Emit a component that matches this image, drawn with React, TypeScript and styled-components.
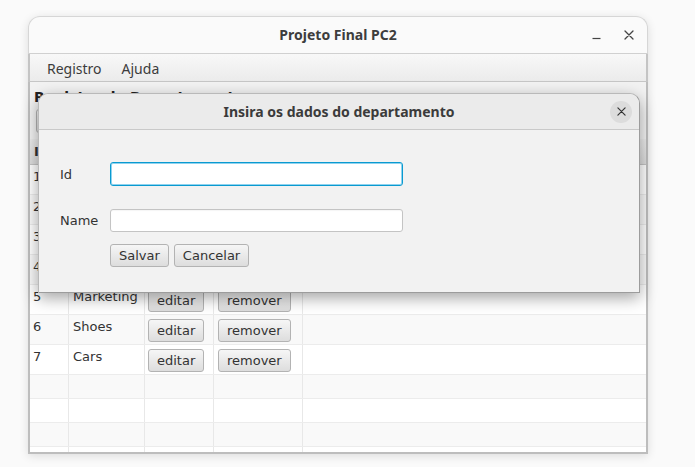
import React from "react";
import styled, { createGlobalStyle } from "styled-components";

const GlobalStyle = createGlobalStyle`
  html, body { margin: 0; padding: 0; background: #fafafa; }
  body { font-family: "DejaVu Sans", sans-serif; }
  * { box-sizing: border-box; }
`;

const Desktop = styled.div`
  position: relative;
  width: 695px;
  height: 467px;
  overflow: hidden;
  background: #fafafa;
`;

const Window = styled.div`
  position: absolute;
  left: 28px;
  top: 16px;
  width: 620px;
  height: 438px;
  display: flex;
  flex-direction: column;
  border-radius: 12px 12px 0 0;
  box-shadow: 0 2px 10px rgba(0, 0, 0, 0.12);
`;

const TitleBar = styled.div`
  height: 38px;
  display: grid;
  grid-template-columns: 1fr auto 1fr;
  align-items: center;
  background: #fafafa;
  border: 1px solid #d6d6d6;
  border-bottom: 1px solid #d0d0d0;
  border-radius: 12px 12px 0 0;
  font-family: "Noto Sans", sans-serif;
`;

const Title = styled.div`
  grid-column: 2;
  font-size: 14px;
  font-weight: 700;
  color: #3d3d3d;
  padding-bottom: 1px;
`;

const Controls = styled.div`
  justify-self: end;
  display: flex;
  align-items: center;
  gap: 23px;
  padding-right: 13px;
`;

const MenuBar = styled.div`
  height: 28px;
  display: flex;
  align-items: center;
  gap: 20px;
  padding-left: 17px;
  padding-top: 1px;
  background: linear-gradient(#f8f8f8, #ebebeb);
  border-left: 2px solid #c4c4c4;
  border-right: 2px solid #c4c4c4;
  border-bottom: 1px solid #c6c6c6;
  font-family: "Noto Sans", sans-serif;
  font-size: 14px;
  color: #3c3c3c;
`;

const Content = styled.div`
  flex: 1;
  display: flex;
  flex-direction: column;
  background: #f2f2f2;
  border-left: 2px solid #bdbdbd;
  border-right: 2px solid #bdbdbd;
  border-bottom: 2px solid #bdbdbd;
  padding-top: 7px;
  overflow: hidden;
`;

const Heading = styled.div`
  font-weight: 700;
  font-size: 14px;
  line-height: 17px;
  color: #222;
  margin-left: 4px;
`;

const Toolbar = styled.div`
  display: flex;
  margin: 3px 0 6px 6px;
`;

const Button = styled.button<{ $h?: number }>`
  height: ${(p) => p.$h ?? 23}px;
  padding: 0 8px;
  border: 1px solid #b3b3b3;
  border-radius: 3px;
  background: linear-gradient(#f6f6f6, #dddddd);
  font-family: "DejaVu Sans", sans-serif;
  font-size: 13px;
  color: #333;
  line-height: 1;
  cursor: default;
`;

const Table = styled.div`
  flex: 1;
  display: flex;
  flex-direction: column;
  background: #fff;
  overflow: hidden;
`;

const Row = styled.div<{ $h: number; $alt?: boolean; $head?: boolean }>`
  display: grid;
  grid-template-columns: 39px 76px 69px 89px 1fr;
  height: ${(p) => p.$h}px;
  flex-shrink: 0;
  background: ${(p) =>
    p.$head ? "linear-gradient(#ececec, #dcdcdc)" : p.$alt ? "#f9f9f9" : "#ffffff"};
  border-bottom: 1px solid ${(p) => (p.$head ? "#c4c4c4" : "#ececec")};
`;

const Cell = styled.div<{ $head?: boolean; $last?: boolean }>`
  border-right: ${(p) => (p.$last ? "none" : `1px solid ${p.$head ? "#c8c8c8" : "#e8e8e8"}`)};
  padding: ${(p) => (p.$head ? "5px 4px" : "4px 3px")};
  font-size: 13px;
  line-height: 16px;
  color: #333;
  font-weight: ${(p) => (p.$head ? 700 : 400)};
  overflow: hidden;
  white-space: nowrap;
`;

const TextCell = styled(Cell)`
  padding-left: 4px;
`;

const Dialog = styled.div`
  position: absolute;
  left: 38px;
  top: 93px;
  width: 602px;
  height: 200px;
  display: flex;
  flex-direction: column;
  border-radius: 10px 10px 0 0;
  border: 1px solid #b9b9b9;
  border-right-color: #9c9c9c;
  border-bottom-color: #9c9c9c;
  background: #f2f2f2;
  box-shadow: 0 5px 16px rgba(0, 0, 0, 0.36);
`;

const DialogHeader = styled.div`
  height: 36px;
  flex-shrink: 0;
  display: grid;
  grid-template-columns: 1fr auto 1fr;
  align-items: center;
  background: #ebebeb;
  border-bottom: 1px solid #c9c9c9;
  border-radius: 10px 10px 0 0;
  font-family: "Noto Sans", sans-serif;
`;

const DialogTitle = styled.div`
  grid-column: 2;
  font-size: 14px;
  font-weight: 700;
  color: #3b3b3b;
`;

const CloseCircle = styled.div`
  justify-self: end;
  margin-right: 7px;
  width: 22px;
  height: 22px;
  border-radius: 50%;
  background: #dcdcdc;
  display: flex;
  align-items: center;
  justify-content: center;
`;

const Form = styled.div`
  display: flex;
  flex-direction: column;
  padding: 32px 0 0 21px;
`;

const FormRow = styled.div<{ $mt?: number }>`
  display: grid;
  grid-template-columns: 50px 293px;
  align-items: center;
  margin-top: ${(p) => p.$mt ?? 0}px;
`;

const Label = styled.label`
  font-size: 13px;
  color: #333;
`;

const Field = styled.div<{ $focused?: boolean }>`
  grid-column: 2;
  height: ${(p) => (p.$focused ? 24 : 23)}px;
  background: #fff;
  border-radius: 3px;
  border: 1px solid ${(p) => (p.$focused ? "#0a9ad0" : "#c4c4c4")};
  box-shadow: ${(p) =>
    p.$focused ? "inset 0 0 0 1px #8fd3ef" : "inset 0 1px 1px rgba(0,0,0,0.04)"};
`;

const ButtonRow = styled.div`
  grid-column: 2;
  display: flex;
  gap: 5px;
`;

const data = [
  { id: 1, name: "Finance" },
  { id: 2, name: "Sales" },
  { id: 3, name: "HR" },
  { id: 4, name: "IT" },
  { id: 5, name: "Marketing" },
  { id: 6, name: "Shoes" },
  { id: 7, name: "Cars" },
];

const MinIcon = () => (
  <svg width="9" height="10" viewBox="0 0 9 10">
    <line x1="0.5" y1="8.5" x2="8.5" y2="8.5" stroke="#444" strokeWidth="1.2" />
  </svg>
);

const XIcon = ({ size, color }: { size: number; color: string }) => (
  <svg width={size} height={size} viewBox="0 0 10 10">
    <path d="M1 1 L9 9 M9 1 L1 9" stroke={color} strokeWidth="1.3" strokeLinecap="round" />
  </svg>
);

export default function App() {
  return (
    <>
      <GlobalStyle />
      <Desktop>
        <Window>
          <TitleBar>
            <Title>Projeto Final PC2</Title>
            <Controls>
              <MinIcon />
              <XIcon size={10} color="#444" />
            </Controls>
          </TitleBar>
          <MenuBar>
            <span>Registro</span>
            <span>Ajuda</span>
          </MenuBar>
          <Content>
            <Heading>Registro de Departamentos</Heading>
            <Toolbar>
              <Button $h={24}>Adicionar</Button>
            </Toolbar>
            <Table>
              <Row $h={26} $head>
                <Cell $head>Id</Cell>
                <Cell $head>Name</Cell>
                <Cell $head></Cell>
                <Cell $head></Cell>
                <Cell $head $last></Cell>
              </Row>
              {data.map((d, i) => (
                <Row key={d.id} $h={30} $alt={i % 2 === 1}>
                  <Cell>{d.id}</Cell>
                  <TextCell>{d.name}</TextCell>
                  <Cell>
                    <Button>editar</Button>
                  </Cell>
                  <TextCell>
                    <Button>remover</Button>
                  </TextCell>
                  <Cell $last />
                </Row>
              ))}
              {[0, 1, 2, 3].map((k) => (
                <Row key={"e" + k} $h={24} $alt={k % 2 === 0}>
                  <Cell />
                  <Cell />
                  <Cell />
                  <Cell />
                  <Cell $last />
                </Row>
              ))}
            </Table>
          </Content>
        </Window>
        <Dialog>
          <DialogHeader>
            <DialogTitle>Insira os dados do departamento</DialogTitle>
            <CloseCircle>
              <XIcon size={9} color="#333" />
            </CloseCircle>
          </DialogHeader>
          <Form>
            <FormRow>
              <Label>Id</Label>
              <Field $focused />
            </FormRow>
            <FormRow $mt={23}>
              <Label>Name</Label>
              <Field />
            </FormRow>
            <FormRow $mt={12}>
              <ButtonRow>
                <Button>Salvar</Button>
                <Button>Cancelar</Button>
              </ButtonRow>
            </FormRow>
          </Form>
        </Dialog>
      </Desktop>
    </>
  );
}
